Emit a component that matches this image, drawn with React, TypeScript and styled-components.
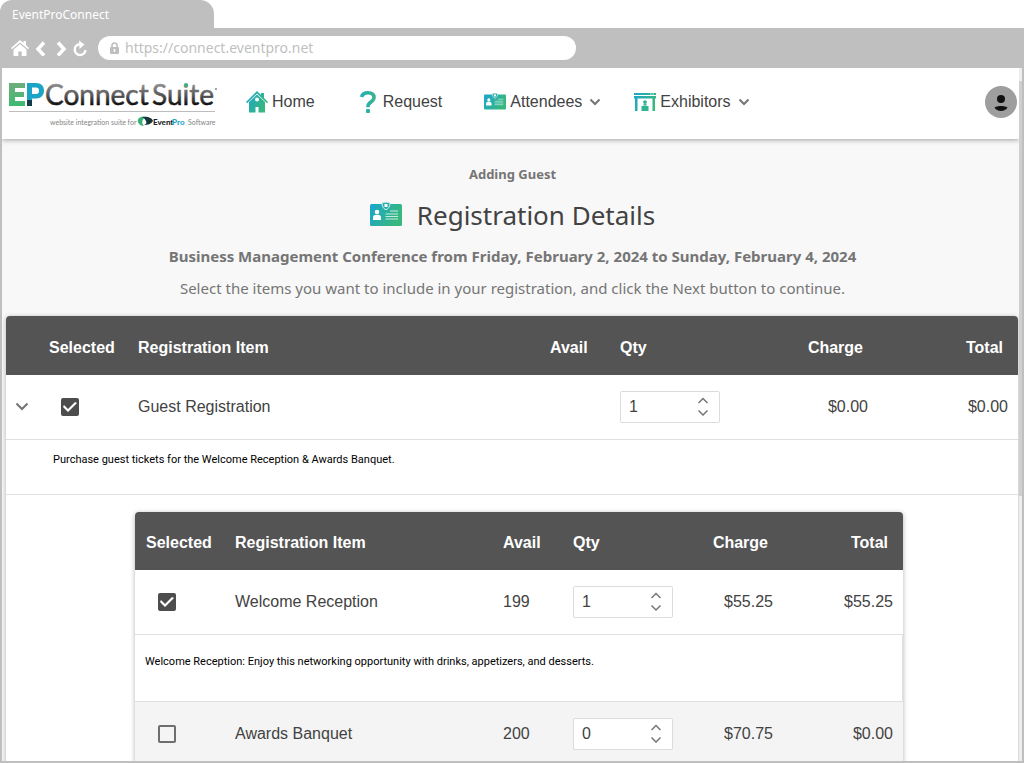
import React, { useState } from "react";
import styled, { createGlobalStyle } from "styled-components";

const chrome = "#bfbfbf";
const line = "#e0e0e0";
const ui = `"Liberation Sans", Arial, sans-serif`;
const humanist = `"Noto Sans", "Open Sans", sans-serif`;

const GlobalStyle = createGlobalStyle`
  *, *::before, *::after { box-sizing: border-box; }
  body { margin: 0; background: #fff; font-family: ${ui}; font-size: 16px; color: #424242; }
  button, input { font: inherit; color: inherit; }
  svg { display: block; flex: none; }
`;

const Browser = styled.div`
  display: flex;
  flex-direction: column;
  height: 100vh;
  overflow: hidden;
`;
const Tab = styled.div`
  width: 214px;
  height: 28px;
  padding: 0 12px;
  flex: none;
  background: ${chrome};
  border-radius: 12px 14px 0 0;
  color: #fff;
  font: 12px/30px ${humanist};
`;
const Toolbar = styled.div`
  display: flex;
  align-items: center;
  flex: none;
  height: 40px;
  padding: 0 11px;
  gap: 4px;
  background: ${chrome};
`;
const ToolButton = styled.button`
  display: grid;
  place-items: center;
  width: 16px;
  height: 20px;
  padding: 0;
  border: 0;
  background: none;
  color: #fff;
`;
const Address = styled.label`
  display: flex;
  align-items: center;
  gap: 6px;
  width: 478px;
  height: 24px;
  margin-left: 7px;
  padding: 0 12px;
  border-radius: 12px;
  background: #fff;
  color: ${chrome};
`;
const AddressInput = styled.input`
  flex: 1;
  min-width: 0;
  padding: 0;
  border: 0;
  outline: 0;
  background: none;
  font: 14px/20px ${humanist};
`;
const Viewport = styled.div`
  display: flex;
  flex: 1;
  min-height: 0;
  border: solid ${chrome};
  border-width: 0 2px 2px;
`;
const Page = styled.div`
  flex: 1;
  min-width: 0;
  overflow: hidden;
  background: #f8f8f8;
`;
const Rail = styled.div`
  width: 3px;
  flex: none;
  padding-top: 13px;
  background: #eee;
`;
const Thumb = styled.div`
  height: 415px;
  background: #cfcfcf;
`;
const Header = styled.header`
  position: relative;
  z-index: 1;
  display: flex;
  align-items: center;
  height: 71px;
  padding: 0 2px 3px 7px;
  background: #fff;
  box-shadow: 0 1px 5px rgba(0, 0, 0, 0.35);
`;
const Nav = styled.nav`
  display: flex;
  flex: 1;
  margin-left: 27px;
`;
const NavLink = styled.a<{ $menu?: boolean }>`
  display: flex;
  align-items: center;
  gap: 4px;
  padding-right: ${(p) => (p.$menu ? 30 : 42)}px;
  color: inherit;
  text-decoration: none;
  line-height: 22px;
`;
const UserButton = styled.button`
  width: 32px;
  height: 32px;
  padding: 0;
  border: 0;
  border-radius: 50%;
  background: #9e9e9e;
`;
const Intro = styled.section`
  display: flex;
  flex-direction: column;
  align-items: center;
  padding: 24px 12px 16px 16px;
  font-family: ${humanist};
  color: #757575;
  text-align: center;
`;
const Eyebrow = styled.div`
  font-size: 13px;
  font-weight: 700;
  line-height: 22px;
`;
const Title = styled.h1`
  display: flex;
  align-items: center;
  gap: 15px;
  margin: 10px 0 9px;
  color: #424242;
  font-size: 26px;
  font-weight: 400;
  line-height: 40px;
`;
const Event = styled.div`
  font-size: 15px;
  font-weight: 700;
  line-height: 24px;
`;
const Hint = styled.div`
  margin-top: 8px;
  font-size: 15px;
  line-height: 24px;
`;
const Card = styled.div<{ $nested?: boolean }>`
  margin: ${(p) => (p.$nested ? "17px 115px 0 129px" : "0 1px 0 4px")};
  border-radius: 4px 4px 0 0;
  background: #fff;
  box-shadow: 0 1px 5px rgba(0, 0, 0, 0.3);
`;
const Table = styled.table`
  width: 100%;
  table-layout: fixed;
  border-collapse: separate;
  border-spacing: 0;
`;
const Th = styled.th<{ $end?: boolean; $pick?: boolean }>`
  height: 59px;
  padding: 4px ${(p) => (p.$end ? 15 : 0)}px 0 ${(p) => (p.$pick ? 11 : 10)}px;
  background: #545454;
  color: #fff;
  text-align: ${(p) => (p.$end ? "right" : "left")};
  white-space: nowrap;
  ${Card} ${Card} & { height: 58px; }
  &:first-child { border-top-left-radius: 4px; }
  &:last-child { border-top-right-radius: 4px; }
`;
const Row = styled.tr<{ $alt?: boolean }>`
  background: ${(p) => (p.$alt ? "#f4f4f4" : "#fff")};
`;
const Td = styled.td<{ $end?: boolean; $pick?: boolean }>`
  height: 65px;
  padding: 0 ${(p) => (p.$end ? 10 : 0)}px 0 ${(p) => (p.$pick ? 23 : 10)}px;
  border-bottom: 1px solid ${line};
  text-align: ${(p) => (p.$end ? "right" : "left")};
`;
const Note = styled.td<{ $nested?: boolean }>`
  height: ${(p) => (p.$nested ? 67 : 55)}px;
  padding: ${(p) => (p.$nested ? "18px 10px 0" : "11px 10px 0 47px")};
  border-bottom: 1px solid ${line};
  border-right: ${(p) => (p.$nested ? `1px solid ${line}` : "0")};
  color: #000;
  font: 11px/18px Roboto, sans-serif;
  vertical-align: top;
`;
const Inset = styled.td`
  padding: 0;
`;
const ExpandButton = styled.button`
  display: grid;
  place-items: center;
  width: 18px;
  height: 24px;
  margin-left: -3px;
  padding: 0;
  border: 0;
  background: none;
`;
const Check = styled.input`
  appearance: none;
  display: block;
  width: 18px;
  height: 18px;
  margin: 0;
  border: 2px solid #6e6e6e;
  border-radius: 2px;
  &:checked { border-color: #4d4d4d; background: #4d4d4d; }
  &:checked::before {
    content: "";
    display: block;
    height: 14px;
    background: #fff;
    clip-path: polygon(0 7px, 1px 5px, 5px 9px, 12px 2px, 14px 3px, 5px 12px);
  }
`;
const Stepper = styled.div`
  display: flex;
  align-items: center;
  width: 100px;
  height: 32px;
  padding: 0 8px;
  border: 1px solid #dcdcdc;
  border-radius: 2px;
  background: #fff;
`;
const Quantity = styled.input`
  flex: 1;
  min-width: 0;
  padding: 0;
  border: 0;
  outline: 0;
  background: none;
`;
const Arrows = styled.div`
  display: flex;
  flex-direction: column;
  gap: 2px;
`;
const Arrow = styled.button`
  display: grid;
  place-items: center;
  width: 16px;
  height: 10px;
  padding: 0;
  border: 0;
  background: none;
`;

const Gradient = ({ id }: { id: string }) => (
  <linearGradient id={id} x1="0" y1="0" x2="1" y2="0.4">
    <stop offset="0" stopColor="#1aa5cf" />
    <stop offset="1" stopColor="#38b87c" />
  </linearGradient>
);

const Chevron = ({ size = 10, up = false, box = size }: { size?: number; up?: boolean; box?: number }) => (
  <svg width={box} height={size} viewBox={`${(size - box) / 2} 0 ${box} ${size}`} fill="none" stroke="#757575" strokeWidth={size === 10 && box === 10 ? 1.5 : 2}>
    <path d={up ? `M0.5 ${size / 2 + 2} L${size / 2} 2.5 L${size - 0.5} ${size / 2 + 2}` : `M0.5 2.500 L${size / 2} ${size / 2 + 2} L${size - 0.5} 2.500`} />
  </svg>
);

const HomeIcon = () => (
  <svg width="22" height="22" viewBox="0 0 22 22">
    <defs><Gradient id="home" /></defs>
    <path fill="url(#home)" fillRule="evenodd" d="M11 0 15 4V2h3v5l4 4-1 1.300L11 2.600 1 12.300 0 11ZM11 3.500l8 7.600V21.500h-6.500V16H9.500v5.500H3V11.100ZM11 6.500a2 2 0 1 0 0 4 2 2 0 0 0 0-4Z" />
  </svg>
);
const QuestionIcon = () => (
  <svg width="22" height="22" viewBox="0 0 22 22">
    <defs><linearGradient id="ask" gradientUnits="userSpaceOnUse" x1="3" y1="0" x2="19" y2="0"><stop offset="0" stopColor="#26aebb" /><stop offset="1" stopColor="#38b58c" /></linearGradient></defs>
    <path d="M4.500 6C5.500 3 8 1.800 11 1.800c3.500 0 6 1.600 6 4.700 0 4.500-6 4.500-6 8.800v1" fill="none" stroke="url(#ask)" strokeWidth="3.600" />
    <rect x="9" y="18" width="4" height="4" rx="1" fill="url(#ask)" />
  </svg>
);
const BadgeIcon = ({ width, id }: { width: number; id: string }) => (
  <svg width={width} height={(width * 26) / 32} viewBox="0 0 32 26">
    <defs><Gradient id={id} /></defs>
    <rect y="2" width="32" height="22" rx="1.500" fill={`url(#${id})`} />
    <path d="M12 .8c2-.3 3-.5 4-.8 1 .3 2 .5 4 .8 0 3.500-1 5.500-4 7-3-1.500-4-3.500-4-7Z" fill="#2aaeae" stroke="#d7efec" />
    <rect x="14.500" y="2" width="3" height="3" fill="#fff" />
    <circle cx="7" cy="10" r="2.300" fill="#fff" />
    <path d="M3 18v-2.500c0-2 1.500-2.700 4-2.700s4 .7 4 2.700V18Z" fill="#fff" />
    <path d="M20 9h8M15.500 12H28M15.500 14.500H28M15.500 17H28" stroke="#c7ebe0" strokeWidth="1" />
  </svg>
);
const BoothIcon = () => (
  <svg width="22" height="22" viewBox="0 0 22 22">
    <defs><Gradient id="booth" /></defs>
    <path fill="url(#booth)" d="M0 2h22v2H0ZM0 5h22v2.500h-1V20h-2.500V7.500H3.500V20H1V7.500H0ZM7.500 15h7v5h-7ZM9 14.500c0-2 4-2 4 0ZM11 9.200a1.900 1.900 0 1 1 0 3.800 1.900 1.900 0 0 1 0-3.800Z" />
    <path d="M16 3h4" stroke="#fff" strokeWidth=".8" strokeDasharray="1 .6" />
  </svg>
);

const Logo = () => (
  <svg width="210" height="50" viewBox="0 0 210 50" role="img" aria-label="EP Connect Suite">
    <defs>
      <linearGradient id="letterE" x1="0" y1="0" x2="0" y2="1"><stop offset="0" stopColor="#6fae7c" /><stop offset="1" stopColor="#3dba6f" /></linearGradient>
      <linearGradient id="steel" gradientUnits="userSpaceOnUse" x1="0" y1="6" x2="0" y2="29"><stop offset="0" stopColor="#949494" /><stop offset=".55" stopColor="#555" /><stop offset="1" stopColor="#050505" /></linearGradient>
    </defs>
    <path d="M0 6h16v5H6v4h9v5H6v4h10v5H0Z" fill="url(#letterE)" />
    <path fillRule="evenodd" d="M18 6h9c5 0 8 3 8 7.500s-3 8-8 8h-4v7.500h-5ZM23 10.500v6.500h4c2 0 3-1 3-3.200s-1-3.300-3-3.300Z" fill="#1ba4c6" />
    <path d="M18 23h5v6h-5Z" fill="#143b47" />
    <g fill="url(#steel)" stroke="url(#steel)" strokeWidth=".5" fontFamily="Lato, sans-serif" fontSize="28">
      <text x="36" y="28">Connect</text>
      <text x="143" y="28">Suite</text>
    </g>
    <circle cx="177" cy="8" r="2" fill="#3bb27a" />
    <circle cx="207" cy="12" r="1" fill="#888" />
    <path d="M0 34.500h206" stroke="#bdbdbd" />
    <text x="41" y="48" fill="#858585" fontFamily="Lato, sans-serif" fontSize="7">website integration suite for</text>
    <path d="M136 40c-5-1-8 2-7 5 .5 2 3 4 6 4-2-2-3-5 1-9Z" fill="#3aaf72" />
    <path fillRule="evenodd" d="M133 40c6-1 10 1 11 4-2 3-5 4-9 4 2-1 3-2 2-4-1-2-2-3-4-4Z" fill="#14343c" />
    <g fontFamily="Lato, sans-serif" fontSize="8" fontWeight="900">
      <text x="144" y="48" fill="#222">Event</text>
      <text x="163" y="48" fill="#1ba4c6">Pro</text>
    </g>
    <text x="179" y="48" fill="#858585" fontFamily="Lato, sans-serif" fontSize="7">Software</text>
  </svg>
);

function QuantityField({ label, initial }: { label: string; initial: number }) {
  const [value, setValue] = useState(initial);
  return (
    <Stepper>
      <Quantity aria-label={`Quantity, ${label}`} inputMode="numeric" value={value} onChange={(e) => setValue(Number(e.target.value) || 0)} />
      <Arrows>
        <Arrow aria-label="Increase" onClick={() => setValue(value + 1)}><Chevron up /></Arrow>
        <Arrow aria-label="Decrease" onClick={() => setValue(Math.max(0, value - 1))}><Chevron /></Arrow>
      </Arrows>
    </Stepper>
  );
}

type Item = { name: string; avail?: number; qty: number; charge: string; total: string; selected: boolean };

const HeadCells = () => (
  <>
    <Th $pick>Selected</Th>
    <Th>Registration Item</Th>
    <Th>Avail</Th>
    <Th>Qty</Th>
    <Th $end>Charge</Th>
    <Th $end>Total</Th>
  </>
);
const ItemCells = ({ item }: { item: Item }) => (
  <>
    <Td $pick><Check type="checkbox" aria-label={`Select ${item.name}`} defaultChecked={item.selected} /></Td>
    <Td>{item.name}</Td>
    <Td>{item.avail}</Td>
    <Td><QuantityField label={item.name} initial={item.qty} /></Td>
    <Td $end>{item.charge}</Td>
    <Td $end>{item.total}</Td>
  </>
);
const Columns = ({ widths }: { widths: (number | undefined)[] }) => (
  <colgroup>{widths.map((w, i) => <col key={i} width={w} />)}</colgroup>
);

const guest: Item = { name: "Guest Registration", qty: 1, charge: "$0.00", total: "$0.00", selected: true };
const reception: Item = { name: "Welcome Reception", avail: 199, qty: 1, charge: "$55.25", total: "$55.25", selected: true };
const banquet: Item = { name: "Awards Banquet", avail: 200, qty: 0, charge: "$70.75", total: "$0.00", selected: false };

export default function App() {
  return (
    <Browser>
      <GlobalStyle />
      <Tab>EventProConnect</Tab>
      <Toolbar>
        <ToolButton aria-label="Home page">
          <svg width="18" height="18" viewBox="0 0 18 18" fill="currentColor"><path d="M9 1 12.500 4V2h2.500v4.200L18 9l-1 1.200L9 3.500 1 10.200 0 9ZM9 5l6.500 5.500V17h-4.800v-4.500H7.300V17H2.500v-6.500Z" /></svg>
        </ToolButton>
        <ToolButton aria-label="Back">
          <svg width="16" height="16" viewBox="0 0 16 16" fill="none" stroke="currentColor" strokeWidth="3.500"><path d="M13 2.500 7 9l6 6.500" /></svg>
        </ToolButton>
        <ToolButton aria-label="Forward">
          <svg width="16" height="16" viewBox="0 0 16 16" fill="none" stroke="currentColor" strokeWidth="3.500"><path d="m7 2.500 6 6.500-6 6.500" /></svg>
        </ToolButton>
        <ToolButton aria-label="Reload">
          <svg width="16" height="18" viewBox="0 0 16 18" fill="none" stroke="currentColor" strokeWidth="2.500"><path d="M8.500 5.200a5.400 5.400 0 1 0 6 6" /><path d="M8 1.500 13.500 5.500 8.500 10Z" fill="currentColor" stroke="none" /></svg>
        </ToolButton>
        <Address>
          <svg width="9" height="12" viewBox="0 0 9 12"><path d="M2 5V3.500a2.500 2.500 0 0 1 5 0V5" fill="none" stroke="currentColor" strokeWidth="1.600" /><rect y="5" width="9" height="7" rx="1" fill="currentColor" /><path d="M4.500 7v3" stroke="#fff" strokeWidth="1.500" /></svg>
          <AddressInput aria-label="Address" defaultValue="https://connect.eventpro.net" />
        </Address>
      </Toolbar>
      <Viewport>
        <Page>
          <Header>
            <Logo />
            <Nav>
              <NavLink href="#home"><HomeIcon />Home</NavLink>
              <NavLink href="#request"><QuestionIcon />Request</NavLink>
              <NavLink href="#attendees" $menu><BadgeIcon width={22} id="attendees" />Attendees<Chevron box={18} /></NavLink>
              <NavLink href="#exhibitors" $menu><BoothIcon />Exhibitors<Chevron box={18} /></NavLink>
            </Nav>
            <UserButton aria-label="Account">
              <svg width="32" height="32" viewBox="0 0 32 32" fill="#111"><circle cx="16" cy="13" r="4" /><path d="M9.500 21.500c3-2 10-2 13 0-2 4.500-11 4.500-13 0Z" /></svg>
            </UserButton>
          </Header>
          <Intro>
            <Eyebrow>Adding Guest</Eyebrow>
            <Title><BadgeIcon width={32} id="registration" />Registration Details</Title>
            <Event>Business Management Conference from Friday, February 2, 2024 to Sunday, February 4, 2024</Event>
            <Hint>Select the items you want to include in your registration, and click the Next button to continue.</Hint>
          </Intro>
          <Card>
            <Table>
              <Columns widths={[32, 90, undefined, 70, 128, 140, 140]} />
              <thead><tr><Th aria-label="Expand" /><HeadCells /></tr></thead>
              <tbody>
                <Row>
                  <Td><ExpandButton aria-label="Collapse Guest Registration"><Chevron size={12} /></ExpandButton></Td>
                  <ItemCells item={guest} />
                </Row>
                <Row><Note colSpan={7}>Purchase guest tickets for the Welcome Reception &amp; Awards Banquet.</Note></Row>
                <Row>
                  <Inset colSpan={7}>
                    <Card $nested>
                      <Table>
                        <Columns widths={[90, undefined, 70, 120, 100, 120]} />
                        <thead><tr><HeadCells /></tr></thead>
                        <tbody>
                          <Row><ItemCells item={reception} /></Row>
                          <Row><Note $nested colSpan={6}>Welcome Reception: Enjoy this networking opportunity with drinks, appetizers, and desserts.</Note></Row>
                          <Row $alt><ItemCells item={banquet} /></Row>
                        </tbody>
                      </Table>
                    </Card>
                  </Inset>
                </Row>
              </tbody>
            </Table>
          </Card>
        </Page>
        <Rail><Thumb /></Rail>
      </Viewport>
    </Browser>
  );
}
